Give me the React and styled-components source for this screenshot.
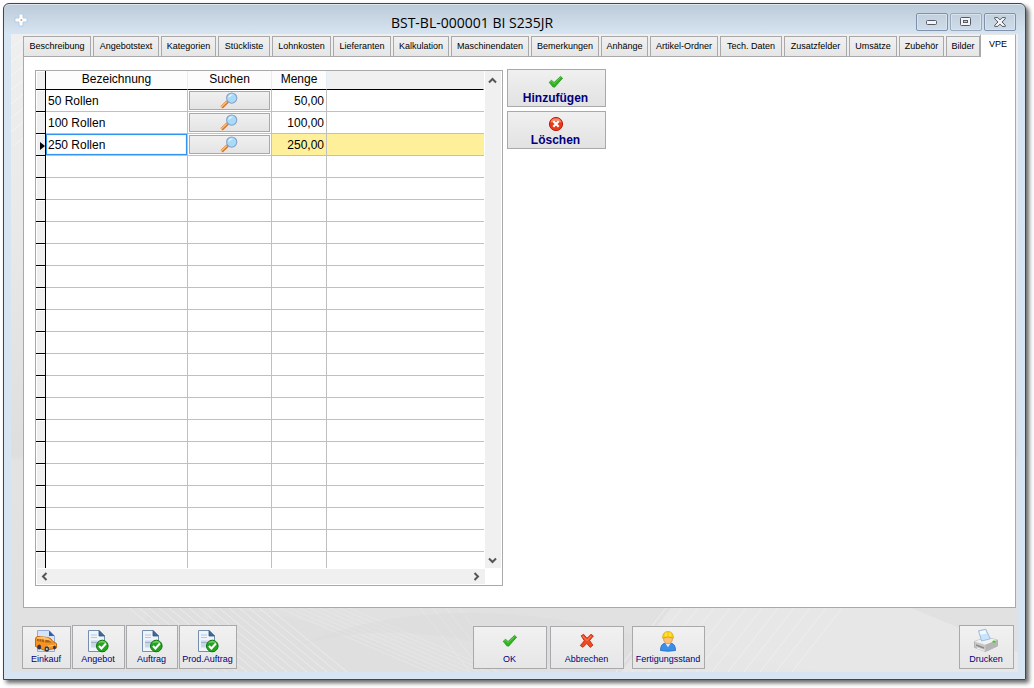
import React, { useId, useState } from "react";
import styled, { createGlobalStyle, css } from "styled-components";

const GlobalStyle = createGlobalStyle`
  *, *::before, *::after { box-sizing: border-box; }
  body {
    margin: 0;
    background: #fff;
    font-family: "Liberation Sans", Arial, sans-serif;
    color: #000;
  }
  button, input { font: inherit; color: inherit; margin: 0; }
`;

const LINE = "#a9a9ab";
const GRID = "#c0c0c0";

const Page = styled.div`
  display: flex;
  min-height: 100vh;
  padding: 3px 8px 8px 3px;
`;

const Window = styled.main`
  flex: 1;
  min-width: 0;
  display: flex;
  flex-direction: column;
  padding: 0 7px 7px;
  border: 1px solid #45464a;
  border-radius: 6px 6px 0 0;
  background: linear-gradient(#bccbd9, #d7e4f1 30px);
  box-shadow: inset 0 1px 0 #dfe8f0, 3px 3px 4px 0 rgba(0, 0, 0, 0.6);
`;

const TitleBar = styled.header`
  display: flex;
  align-items: center;
  height: 30px;
  padding: 0 2px 0 3px;
`;

const Title = styled.h1`
  flex: 1;
  margin: 0;
  padding-top: 7px;
  text-align: center;
  font: 400 14px/20px "Open Sans", "Noto Sans", sans-serif;
`;

const CaptionButtons = styled.div`
  display: flex;
  gap: 2px;
  padding-top: 6px;
`;

const CaptionButton = styled.button`
  display: grid;
  place-items: center;
  width: 32px;
  height: 18px;
  padding: 0;
  border: 1px solid ${(p) => (p.$soft ? "#98a8bd" : "#7f90ad")};
  border-radius: 2px;
  background: linear-gradient(#c2d0de, #cfdce9);
  box-shadow: inset 0 0 0 1px #d8e3ee;
`;

const Client = styled.div`
  position: relative;
  flex: 1;
  display: flex;
  flex-direction: column;
  padding: 0 2px 0 12px;
  background: linear-gradient(#efefef, #e9e9e9 30%, #dedede 66%, #e3e3e3 67%, #e0e0e0);
`;

const Pattern = styled.svg`
  position: absolute;
  left: 0;
  ${(p) => (p.$top ? "top: 0;" : "bottom: 0;")}
  width: 100%;
  height: ${(p) => (p.$top ? 120 : 64)}px;
  pointer-events: none;
`;

const Tabs = styled.div`
  position: relative;
  display: flex;
  align-items: flex-end;
  gap: 2px;
  height: 23px;
`;

const Tab = styled.button`
  flex: ${(p) => p.$w} 1 ${(p) => p.$w}px;
  min-width: 0;
  height: 21px;
  padding: 0;
  border: 1px solid ${LINE};
  background: linear-gradient(#f0f0f0, #e6e6e6);
  font-size: 9px;
  line-height: 19px;
  white-space: nowrap;
  ${(p) =>
    p.$active &&
    css`
      height: 23px;
      margin-left: -2px;
      padding-bottom: 3px;
      border-top-color: #e8e8e8;
      border-bottom: 0;
      background: #fff;
      position: relative;
      z-index: 1;
    `}
`;

const Panel = styled.section`
  position: relative;
  flex: 1;
  display: flex;
  align-items: flex-start;
  gap: 4px;
  margin-top: -1px;
  padding: 12px 11px 20px;
  border: 1px solid ${LINE};
  background: #fff;
`;

const GridFrame = styled.div`
  display: grid;
  grid-template-columns: 449px 17px;
  margin-top: 1px;
  border: 1px solid ${LINE};
  background: #fff;
`;

const DataTable = styled.table`
  width: 448px;
  table-layout: fixed;
  border-collapse: separate;
  border-spacing: 0;
  font-size: 12px;
  line-height: 14px;

  th, td { padding: 0; }
`;

const HeadCell = styled.th`
  height: 19px;
  border-bottom: 1px solid #000;
  border-right: 1px solid ${(p) => (p.$blank ? "#f0f0f0" : "#e4ecf7")};
  background: ${(p) => (p.$blank ? "#f0f0f0" : "#fcfcfd")};
  font-weight: 400;
  vertical-align: top;
  padding-top: 1px !important;
`;

const Marker = styled.th`
  border-right: 1px solid #000;
  border-bottom: ${(p) => (p.$last ? 0 : 1)}px solid #000;
  background: #f0f0f0;
  box-shadow: inset 1px 1px 0 #fff;
  vertical-align: middle;

  svg { display: block; margin: 3px 0 0 auto; }
`;

const Cell = styled.td`
  height: ${(p) => (p.$last ? 16 : 22)}px;
  border-right: ${(p) => (p.$end ? 0 : 1)}px solid ${GRID};
  border-bottom: ${(p) => (p.$last ? 0 : 1)}px solid ${GRID};
  background: ${(p) => (p.$current ? "#fef09a" : "#fff")};
`;

const Field = styled.input`
  display: block;
  width: 100%;
  height: 21px;
  padding: 0 ${(p) => (p.$number ? 2 : 1)}px;
  border: 1px solid transparent;
  outline: 0;
  background: transparent;
  text-align: ${(p) => (p.$number ? "right" : "left")};
  ${(p) => p.$number && "border-right: 0;"}
  ${(p) =>
    p.$focused &&
    css`
      border-color: #3393f0;
      background: #fff;
      box-shadow: inset 0 0 0 1px #fef6c4;
    `}
`;

const SearchButton = styled.button`
  display: grid;
  place-items: center;
  width: 81px;
  height: 19px;
  margin: 0 auto;
  padding: 0 2px 0 0;
  border: 1px solid ${LINE};
  background: linear-gradient(#f0f0f0, #e4e4e4);
`;

const VScroll = styled.div`
  display: flex;
  flex-direction: column;
  justify-content: space-between;
  align-items: center;
  padding: 5px 1px 3px 0;
  margin-right: 1px;
  background: #f0f0f0;
`;

const HScroll = styled.div`
  display: flex;
  justify-content: space-between;
  align-items: center;
  height: 15px;
  margin: 1px 0 1px 1px;
  padding: 0 4px 0 3px;
  background: #f0f0f0;
`;

const ScrollButton = styled.button`
  display: grid;
  place-items: center;
  padding: 0;
  border: 0;
  background: transparent;
`;

const Actions = styled.div`
  display: flex;
  flex-direction: column;
  gap: 4px;
`;

const ActionButton = styled.button`
  display: flex;
  flex-direction: column;
  align-items: center;
  width: 99px;
  height: 38px;
  padding: 4px 2px 0 0;
  border: 1px solid ${LINE};
  background: linear-gradient(#f0f0f0, #e2e2e2);
  color: #000080;
  font-size: 12px;
  font-weight: 700;
  line-height: 16px;
`;

const Footer = styled.footer`
  position: relative;
  display: grid;
  grid-template-columns: 451fr 486fr auto;
  align-items: end;
  height: 64px;
  padding: 0 2px 3px 0;
  margin-left: -1px;
`;

const Group = styled.div`
  display: flex;
  align-items: flex-end;
  gap: ${(p) => p.$gap}px;
`;

const ToolButton = styled.button`
  display: flex;
  flex-direction: column;
  align-items: center;
  justify-content: flex-end;
  width: ${(p) => p.$w}px;
  height: ${(p) => (p.$tall ? 44 : 43)}px;
  padding: 0 1px 3px 0;
  margin-left: ${(p) => (p.$apart ? 5 : 0)}px;
  border: 1px solid ${LINE};
  background: linear-gradient(#f1f1f1, #e6e6e6);
  color: #000080;
  font-size: 9px;
  line-height: 12px;
  white-space: nowrap;
`;

const IconSlot = styled.span`
  display: grid;
  place-items: center;
  height: 25px;
`;

const CheckIcon = () => (
  <svg width="16" height="16" viewBox="0 0 16 16" aria-hidden="true">
    <path d="M1.2 8.3 3.6 6.2 6 8.6 12.5 2.4 14.6 4.2 6.6 13.2 4.8 12.8Z" fill="#2fb51f" stroke="#1b8a12" strokeWidth=".7" strokeLinejoin="round" />
    <path d="M2.3 8.2 3.6 7.2 6 9.7 12.6 3.4" fill="none" stroke="#6fdc55" strokeWidth=".8" />
  </svg>
);

const DeleteIcon = () => (
  <svg width="16" height="16" viewBox="0 0 16 16" aria-hidden="true">
    <circle cx="8" cy="8" r="6.6" fill="#e8391b" stroke="#b9210c" />
    <path d="M2.4 6.5a5.8 5.8 0 0 1 11.2 0C10 5 6 5 2.4 6.5Z" fill="#f58a6b" />
    <path d="M5.3 5.3 10.7 10.7M10.7 5.3 5.3 10.7" stroke="#fff" strokeWidth="2.2" />
  </svg>
);

const CancelIcon = () => (
  <svg width="16" height="16" viewBox="0 0 16 16" aria-hidden="true">
    <path d="M2.2 2.8 4.6 1.3 8 5.2 12 1.3 14.4 3 10.6 7.4 13.9 12.2 11.2 14.4 7.8 10.4 4 14.3 1.3 12.6 5.3 7.8Z" fill="#f04a23" stroke="#c42c10" strokeWidth=".9" strokeLinejoin="round" />
    <path d="M3.5 3 8 7.6 12.2 3" fill="none" stroke="#ff8a68" strokeWidth="1" />
  </svg>
);

const LensIcon = () => (
  <svg width="18" height="17" viewBox="0 0 18 17" aria-hidden="true">
    <path d="M7.6 9.6 1.6 15.4" stroke="#d9703a" strokeWidth="3.2" />
    <path d="M7 9.4 1.2 14.9" stroke="#ffc164" strokeWidth="1.4" />
    <path d="M8.6 8.6 7.2 10" stroke="#8e8ea8" strokeWidth="2.6" />
    <circle cx="11.7" cy="6.1" r="5.1" fill="#a9dbf8" stroke="#87a3c6" strokeWidth="1.1" />
    <path d="M8.2 6a3.6 3.6 0 0 1 5-3.2C11 4 9.6 5 8.2 6Z" fill="#e6f6ff" />
  </svg>
);

const DocumentIcon = () => (
  <svg width="22" height="24" viewBox="0 0 22 24" aria-hidden="true">
    <path d="M1.5 1.5H12L17.5 7V22.5H1.5Z" fill="#eef4fa" stroke="#7590ae" />
    <path d="M12 1.5 17.5 7H12Z" fill="#3e6998" stroke="#2e5583" strokeWidth=".8" />
    <path d="M4 6h6M4 8.5h6" stroke="#b8c8da" />
    <path d="M4 11.5h11v7H4Z" fill="#c9d8e7" />
    <path d="M4 13.5h11" stroke="#9fb6cf" />
    <circle cx="15.3" cy="17" r="5.8" fill="#23a51d" stroke="#0f7310" />
    <path d="M10.8 14.5a5 5 0 0 1 9 0 12 12 0 0 0-9 0Z" fill="#73cf5d" />
    <path d="m12 17 2.4 2.5 4.5-5" fill="none" stroke="#fff" strokeWidth="2" />
  </svg>
);

const VanIcon = () => (
  <svg width="24" height="24" viewBox="0 0 24 24" aria-hidden="true">
    <path d="M3.5 1.5H15L20.5 7V22.5H3.5Z" fill="#d5e4f8" stroke="#94abd6" />
    <path d="M15 1.5 20.5 7H15Z" fill="#2f5fa9" />
    <path d="M1.5 9.5Q2 7.5 4 7.5L14 8.5Q17 9 19 12.5L22.5 14.5V19L11 21.5 1.5 17.5Z" fill="#f69220" stroke="#cc6711" />
    <path d="M3 8.3Q8 7.2 14 8.8L17.5 12 3 10.5Z" fill="#ffc366" />
    <path d="M3 9.8 10 10.6V13.2L3 12ZM11.2 10.8 15 11.2 17.5 13.4 11.2 13.4Z" fill="#a8601f" />
    <path d="M5.2 9.8v3.2M7.6 10v3.4" stroke="#f69220" strokeWidth=".7" />
    <path d="M12 17.5 22 16" stroke="#ffd08a" />
    <ellipse cx="5.2" cy="18" rx="2" ry="2.5" fill="#343745" />
    <ellipse cx="12.8" cy="20" rx="2.2" ry="2.7" fill="#343745" />
    <ellipse cx="20.5" cy="18.5" rx="1.4" ry="2" fill="#343745" />
    <circle cx="12.8" cy="20" r="1" fill="#c7cbd6" />
  </svg>
);

const WorkerIcon = () => (
  <svg width="18" height="22" viewBox="0 0 18 22" aria-hidden="true">
    <path d="M1.5 20.5Q1.5 13.8 6 13.2L9 15 12 13.2Q16.5 13.8 16.5 20.5Q9 22 1.5 20.5Z" fill="#3b8eea" stroke="#2368bd" strokeWidth=".8" />
    <path d="M6.2 13.2 9 17.2 11.8 13.2" fill="#dcecff" />
    <circle cx="9" cy="9.3" r="4.4" fill="#fcc077" stroke="#d98c3f" strokeWidth=".7" />
    <path d="M3.6 8.2Q3.6 1.6 9 1.6T14.4 8.2Q9 5.8 3.6 8.2Z" fill="#fcd20f" stroke="#cf9c00" strokeWidth=".7" />
    <path d="M7 2.5v3.6M11 2.5v3.6" stroke="#fff08a" strokeWidth=".9" />
  </svg>
);

const PrinterIcon = () => (
  <svg width="26" height="26" viewBox="0 0 26 26" aria-hidden="true">
    <path d="M1.5 13.5 13 9.5 24.5 12V18L12.5 23.5 1.5 19.5Z" fill="#c9c9c9" stroke="#a2a2a2" strokeWidth=".7" />
    <path d="M1.5 13.5 13 9.5 24.5 12 12.5 16.8Z" fill="#f2f2f2" />
    <path d="M12.5 16.8 24.5 12V18L12.5 23.5Z" fill="#b5b5b5" />
    <path d="M3 17 11 20" stroke="#8a8a8a" strokeWidth="1.4" />
    <path d="M4 20 11.5 22.5" stroke="#f4f4f4" strokeWidth="1.3" />
    <path d="M5.5 2.8 12.8 1.2 17.3 10.8 8.6 13Z" fill="#c9e3fb" stroke="#8fb2d8" strokeWidth=".8" />
    <path d="M6.6 3.5 12.2 2.3 13.6 5.4 7.6 6.8Z" fill="#f2f9ff" />
    <ellipse cx="21" cy="13.7" rx="1.7" ry="1.1" fill="#38d51f" />
  </svg>
);

const AppIcon = () => (
  <svg width="14" height="16" viewBox="0 0 14 16" aria-hidden="true">
    <path d="M5 3h4v4h4v4H9v4H5v-4H1V7h4Z" fill="#fff" stroke="#a9cce8" strokeWidth=".9" />
    <circle cx="7.3" cy="9" r="1" fill="#f39a4d" />
  </svg>
);

const Chevron = ({ d }) => (
  <svg width="9" height="9" viewBox="0 0 9 9" aria-hidden="true">
    <path d={d} fill="none" stroke="#555" strokeWidth="2" />
  </svg>
);

const diagonals = (start, step, count, slant) =>
  Array.from({ length: count }, (_, i) => `M${start + i * step} 0l${slant} 64`).join("");

const BottomPattern = () => (
  <Pattern aria-hidden="true">
    <path d="M190 0h-50l-30 64h100ZM210 0 160 45 215 64H430Q330 10 210 0Z" fill="#dcdcdc" opacity=".35" />
    <path d={diagonals(118, 10, 15, 78)} stroke="#ebebeb" fill="none" />
    <path d={diagonals(268, 10, 8, 150)} stroke="#e6e6e6" fill="none" />
    <path d={diagonals(409, 13, 4, 50)} stroke="#e7e7e7" fill="none" />
    <path d="M280 40Q420-20 600 22T820 64H560Q400 0 280 40Z" fill="#dadada" opacity=".35" />
    <path d="M660 0H900L1007 44V64H610Z" fill="#ececec" opacity=".55" />
    <path d={diagonals(655, 16, 12, -50)} stroke="#eee" fill="none" />
  </Pattern>
);

const TopPattern = () => (
  <Pattern $top aria-hidden="true">
    <path d="M0 14 18 0M0 28 30 4M0 42 30 18M0 56 30 32M0 70 30 46M0 84 30 60M0 98 30 74M2 112 30 90" stroke="#f4f4f4" strokeWidth="1" />
  </Pattern>
);

const TABS = [
  ["Beschreibung", 68], ["Angebotstext", 66], ["Kategorien", 55], ["Stückliste", 52],
  ["Lohnkosten", 59], ["Lieferanten", 58], ["Kalkulation", 56], ["Maschinendaten", 78],
  ["Bemerkungen", 68], ["Anhänge", 47], ["Artikel-Ordner", 68], ["Tech. Daten", 62],
  ["Zusatzfelder", 63], ["Umsätze", 48], ["Zubehör", 45], ["Bilder", 34], ["VPE", 36],
];

const ENTRIES = [["50 Rollen", "50,00"], ["100 Rollen", "100,00"], ["250 Rollen", "250,00"]];
const EMPTY_ROWS = 19;

function UnitRow({ name, amount, current }) {
  const id = useId();
  return (
    <tr>
      <Marker scope="row">
        {current && (
          <svg width="5" height="8" viewBox="0 0 5 8" role="img" aria-label="Aktuelle Zeile">
            <path d="M0 0 5 4 0 8Z" />
          </svg>
        )}
      </Marker>
      <Cell>
        <Field id={`${id}n`} aria-label="Bezeichnung" defaultValue={name} $focused={current} />
      </Cell>
      <Cell>
        <SearchButton type="button" aria-label="Suchen"><LensIcon /></SearchButton>
      </Cell>
      <Cell $current={current}>
        <Field id={`${id}m`} aria-label="Menge" defaultValue={amount} $number />
      </Cell>
      <Cell $current={current} $end />
    </tr>
  );
}

function UnitGrid() {
  return (
    <GridFrame>
      <DataTable>
        <colgroup>
          <col style={{ width: 10 }} />
          <col style={{ width: 142 }} />
          <col style={{ width: 84 }} />
          <col style={{ width: 55 }} />
          <col />
        </colgroup>
        <thead>
          <tr>
            <Marker aria-label="Zeile" />
            <HeadCell scope="col">Bezeichnung</HeadCell>
            <HeadCell scope="col">Suchen</HeadCell>
            <HeadCell scope="col">Menge</HeadCell>
            <HeadCell $blank aria-hidden="true" />
          </tr>
        </thead>
        <tbody>
          {ENTRIES.map(([name, amount], i) => (
            <UnitRow key={name} name={name} amount={amount} current={i === 2} />
          ))}
          {Array.from({ length: EMPTY_ROWS }, (_, i) => {
            const last = i === EMPTY_ROWS - 1;
            return (
              <tr key={i}>
                <Marker $last={last} />
                <Cell $last={last} />
                <Cell $last={last} />
                <Cell $last={last} />
                <Cell $last={last} $end />
              </tr>
            );
          })}
        </tbody>
      </DataTable>
      <VScroll>
        <ScrollButton type="button" aria-label="Nach oben"><Chevron d="M1 6.5 4.5 3 8 6.5" /></ScrollButton>
        <ScrollButton type="button" aria-label="Nach unten"><Chevron d="M1 2.5 4.5 6 8 2.5" /></ScrollButton>
      </VScroll>
      <HScroll>
        <ScrollButton type="button" aria-label="Nach links"><Chevron d="M6.5 1 3 4.5 6.5 8" /></ScrollButton>
        <ScrollButton type="button" aria-label="Nach rechts"><Chevron d="M2.5 1 6 4.5 2.5 8" /></ScrollButton>
      </HScroll>
    </GridFrame>
  );
}

const Tool = ({ icon, label, ...rest }) => (
  <ToolButton type="button" {...rest}>
    <IconSlot>{icon}</IconSlot>
    {label}
  </ToolButton>
);

export default function App() {
  const [active, setActive] = useState("VPE");
  return (
    <Page>
      <GlobalStyle />
      <Window>
        <TitleBar>
          <AppIcon />
          <Title>BST-BL-000001 BI S235JR</Title>
          <CaptionButtons>
            <CaptionButton type="button" aria-label="Minimieren">
              <svg width="12" height="6" viewBox="0 0 12 6"><rect x=".5" y="1.5" width="10" height="4" rx="1" fill="#f4f4f4" stroke="#555a66" /></svg>
            </CaptionButton>
            <CaptionButton type="button" aria-label="Maximieren" $soft>
              <svg width="12" height="10" viewBox="0 0 12 10">
                <rect x=".5" y=".5" width="10" height="8" rx="1" fill="#f4f4f4" stroke="#555a66" />
                <rect x="3.5" y="3.5" width="4" height="2" fill="#c3d0de" stroke="#555a66" />
              </svg>
            </CaptionButton>
            <CaptionButton type="button" aria-label="Schließen">
              <svg width="12" height="10" viewBox="0 0 12 10">
                <path d="M.7.6H3.8L6 2.9 8.2.6h3.1V1.8L8 5l3.3 3.2V9.4H8.2L6 7.1 3.8 9.4H.7V8.2L4 5 .7 1.8Z" fill="#f4f4f4" stroke="#555a66" />
              </svg>
            </CaptionButton>
          </CaptionButtons>
        </TitleBar>
        <Client>
          <TopPattern />
          <BottomPattern />
          <Tabs role="tablist">
            {TABS.map(([label, w]) => (
              <Tab key={label} type="button" role="tab" aria-selected={active === label} $w={w} $active={active === label} onClick={() => setActive(label)}>
                {label}
              </Tab>
            ))}
          </Tabs>
          <Panel role="tabpanel" aria-label={active}>
            <UnitGrid />
            <Actions>
              <ActionButton type="button"><CheckIcon />Hinzufügen</ActionButton>
              <ActionButton type="button"><DeleteIcon />Löschen</ActionButton>
            </Actions>
          </Panel>
          <Footer>
            <Group $gap={1}>
              <Tool icon={<VanIcon />} label="Einkauf" $w={49} />
              <Tool icon={<DocumentIcon />} label="Angebot" $w={53} $tall />
              <Tool icon={<DocumentIcon />} label="Auftrag" $w={52} $tall />
              <Tool icon={<DocumentIcon />} label="Prod.Auftrag" $w={58} $tall />
            </Group>
            <Group $gap={3}>
              <Tool icon={<CheckIcon />} label="OK" $w={74} />
              <Tool icon={<CancelIcon />} label="Abbrechen" $w={74} />
              <Tool icon={<WorkerIcon />} label="Fertigungsstand" $w={73} $apart />
            </Group>
            <Tool icon={<PrinterIcon />} label="Drucken" $w={55} $tall />
          </Footer>
        </Client>
      </Window>
    </Page>
  );
}
